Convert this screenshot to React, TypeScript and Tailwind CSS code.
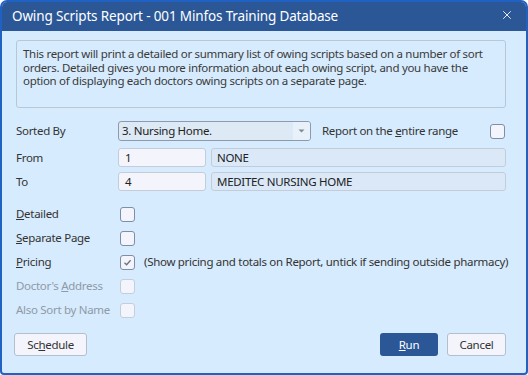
import React from 'react';
import { X } from 'lucide-react';

const font = { fontFamily: '"Noto Sans", "Open Sans", sans-serif' };

const Check: React.FC<{ checked?: boolean; disabled?: boolean }> = ({ checked, disabled }) => (
  <div
    className={`w-[15px] h-[15px] shrink-0 rounded-[3px] border flex items-center justify-center bg-[#f3f4fc] ${
      disabled ? 'border-[#c3cedb]' : 'border-[#7d8ea6]'
    }`}
  >
    {checked && (
      <svg width="9" height="9" viewBox="0 0 9 9">
        <path d="M1.5 4.8 L3.6 6.8 L7.6 2.2" fill="none" stroke="#6b7480" strokeWidth="1.3" />
      </svg>
    )}
  </div>
);

const CheckRow: React.FC<{ label: React.ReactNode; checked?: boolean; disabled?: boolean; note?: string }> = ({
  label,
  checked,
  disabled,
  note,
}) => (
  <div className="flex items-center h-[24px]">
    <div className={`w-[104px] shrink-0 whitespace-nowrap ${disabled ? 'text-[#8e9aa8]' : 'text-[#333]'}`}>{label}</div>
    <Check checked={checked} disabled={disabled} />
    {note && <span className="ml-[9px] text-[#333] whitespace-nowrap">{note}</span>}
  </div>
);

export default function App() {
  return (
    <div className="w-[528px] h-[375px] bg-white text-[11.5px] tracking-[-0.3px]" style={font}>
      <div className="w-[528px] h-[375px] flex flex-col rounded-t-[7px] rounded-b-[4px] border-2 border-[#1f62c4] overflow-hidden bg-[#d6ebfd]">
        {/* title bar */}
        <div className="h-[29px] bg-[#2b5797] flex items-center justify-between pl-[10px] pr-[12px] shrink-0">
          <span className="text-white text-[13.5px] tracking-[-0.15px]">Owing Scripts Report - 001 Minfos Training Database</span>
          <X size={14} strokeWidth={1.5} className="text-white -mt-[4px]" />
        </div>

        <div className="flex flex-col flex-1 pl-[14px] pr-[20px]">
          {/* info box */}
          <div className="mt-[9px] h-[68px] rounded-[3px] border border-[#b9c6d4] px-[6px] pt-[6px] leading-[13.5px] text-[#3a3a3a]">
            This report will print a detailed or summary list of owing scripts based on a number of sort orders. Detailed gives you more information about each owing script, and you have the option of displaying each doctors owing scripts on a separate page.
          </div>

          {/* sorted by */}
          <div className="flex items-center mt-[13px] h-[20px]">
            <div className="w-[102px] shrink-0 text-[#333]">Sorted By</div>
            <div className="w-[193px] shrink-0 h-[20px] rounded-[3px] border border-[#8c9aac] bg-[#dde9f5] flex items-center overflow-hidden">
              <span className="flex-1 pl-[3px] text-[#222]">3. Nursing Home.</span>
              <div className="w-[17px] h-full bg-[#e8f0fa] flex items-center justify-center">
                <svg width="7" height="4" viewBox="0 0 7 4">
                  <path d="M0.5 0.5 L3.5 3.5 L6.5 0.5 Z" fill="#808890" />
                </svg>
              </div>
            </div>
            <div className="ml-[11px] flex-1 text-[#333]">
              Report on the <span className="underline">e</span>ntire range
            </div>
            <div className="mr-[1px]">
              <Check />
            </div>
          </div>

          {/* from */}
          <div className="flex items-center mt-[7px] h-[19px]">
            <div className="w-[102px] shrink-0 text-[#333]">From</div>
            <div className="w-[88px] shrink-0 h-[19px] rounded-[3px] border border-[#c4ccd8] bg-[#f3f4fc] pl-[6px] leading-[17px] text-[#222]">1</div>
            <div className="ml-[5px] flex-1 h-[19px] rounded-[3px] border border-[#c4ccd8] bg-[#dae8f7] pl-[5px] leading-[17px] text-[#222]">NONE</div>
          </div>

          {/* to */}
          <div className="flex items-center mt-[5px] h-[19px]">
            <div className="w-[102px] shrink-0 text-[#333]">To</div>
            <div className="w-[88px] shrink-0 h-[19px] rounded-[3px] border border-[#c4ccd8] bg-[#f3f4fc] pl-[6px] leading-[17px] text-[#222]">4</div>
            <div className="ml-[5px] flex-1 h-[19px] rounded-[3px] border border-[#c4ccd8] bg-[#dae8f7] pl-[5px] leading-[17px] text-[#222]">MEDITEC NURSING HOME</div>
          </div>

          {/* checkboxes */}
          <div className="flex flex-col mt-[11px]">
            <CheckRow label={<><span className="underline">D</span>etailed</>} />
            <CheckRow label={<><span className="underline">S</span>eparate Page</>} />
            <CheckRow
              label={<><span className="underline">P</span>ricing</>}
              checked
              note="(Show pricing and totals on Report, untick if sending outside pharmacy)"
            />
            <CheckRow label={<>Doctor's <span className="underline">A</span>ddress</>} disabled />
            <CheckRow label="Also Sort by Name" disabled />
          </div>

          {/* buttons */}
          <div className="flex items-center mt-[11px]">
            <button className="-ml-[2px] w-[73px] h-[23px] rounded-[3px] border border-[#b3bfcd] bg-[#f3f4fc] text-[#333]">
              Sc<span className="underline">h</span>edule
            </button>
            <div className="flex-1" />
            <button className="w-[58px] h-[23px] rounded-[3px] bg-[#2b5797] text-white">
              <span className="underline">R</span>un
            </button>
            <button className="ml-[9px] w-[59px] h-[23px] rounded-[3px] border border-[#b3bfcd] bg-[#f3f4fc] text-[#333]">
              Cancel
            </button>
          </div>
        </div>
      </div>
    </div>
  );
}
